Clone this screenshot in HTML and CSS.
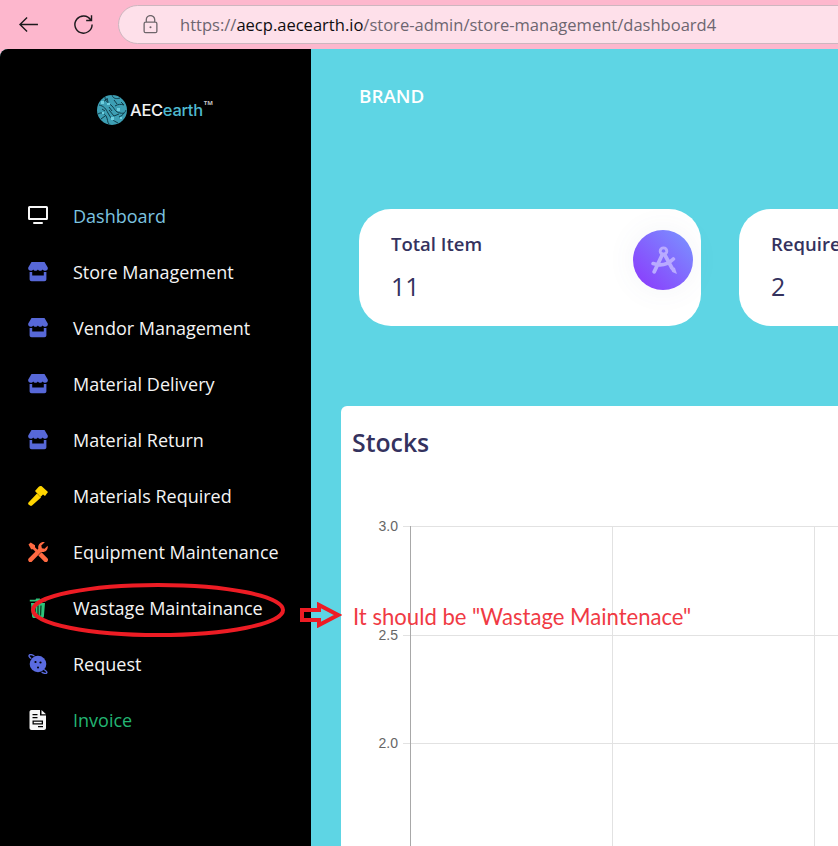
FILE: index.html
```html
<!DOCTYPE html>
<html lang="en">
<head>
<meta charset="utf-8">
<title>AECearth Dashboard</title>
<link rel="stylesheet" href="styles.css">
</head>
<body>
<svg class="defs" width="0" height="0" aria-hidden="true">
  <symbol id="store" viewBox="0 0 20 20">
    <path d="M3.5 0H16.5L19.6 5.2C20.4 7 19.2 8.8 17.3 8.8C16 8.8 15.2 8.2 14.7 7.4C14.1 8.2 13.2 8.8 12.2 8.8C11.2 8.8 10.4 8.3 9.9 7.4C9.4 8.3 8.5 8.8 7.5 8.8C6.5 8.8 5.7 8.3 5.2 7.4C4.7 8.2 3.900 8.8 2.7 8.8C.8 8.8-.4 7 .4 5.2Z"/>
    <path d="M1.6 10H4.2V13.6H15.8V10H18.4V17.2C18.4 18.4 17.6 19.2 16.4 19.2H3.6C2.4 19.2 1.6 18.4 1.6 17.2Z"/>
  </symbol>
</svg>

<header class="browser-bar">
  <svg class="nav-glyph back" viewBox="0 0 22 18"><path d="M21 9H2M9.5 1.5 2 9l7.5 7.5"/></svg>
  <svg class="nav-glyph reload" viewBox="0 0 22 22"><path d="M18.6 6.2A9 9 0 1 0 20 11M19.4 1.2V6.8H13.8"/></svg>
  <div class="address">
    <svg class="lock" viewBox="0 0 16 20"><path d="M3.5 7.5V5a4.5 4.5 0 0 1 9 0v2.5M2.8 7.5h10.4c.9 0 1.6.7 1.6 1.6v8c0 .9-.7 1.6-1.6 1.6H2.8c-.9 0-1.6-.7-1.6-1.6v-8c0-.9.7-1.6 1.6-1.6Z"/><circle class="lock-dot" cx="8" cy="13" r="1.1"/></svg>
    <span class="url"><span class="url-dim">https://</span><span class="url-host">aecp.aecearth.io</span><span class="url-dim">/store-admin/store-management/dashboard4</span></span>
  </div>
</header>

<div class="app">
  <aside class="sidebar">
    <div class="logo">
      <svg class="globe" viewBox="0 0 30 30">
        <circle cx="15" cy="15" r="15" fill="#3d9fb4"/>
        <path d="M2 10c5 1 7 4 9 8s5 8 10 10M8 2c0 5 4 6 7 9s3 6 8 7 5-1 6-3M15 0c1 4 5 4 8 3M1 19c3-2 6-1 8 2s1 6 3 8M18 11c3-2 6-2 9-1M12 15l5 6 5-2M6 7l4-3M22 22c2-1 4-2 5-4M5 14l3 2M17 5l3 4M4 24l4-3M24 7l3 3M10 3l1 4M15 16l-3-4" fill="none" stroke="#103c49" stroke-width="1"/>
        <path d="M4 6h3v3H4zM20 13h3v3h-3zM14 22h3v3h-3zM10 8h3v2h-3zM23 22h2v2h-2zM5 17h2v2H5z" fill="#6ecfdf"/>
      </svg>
      <span class="logo-text">AEC<span class="logo-accent">earth</span></span>
      <span class="logo-tm">TM</span>
    </div>
    <nav class="menu">
      <a class="menu-item menu-item-active">
        <svg class="menu-icon" viewBox="0 0 20 20"><path class="ico-white" fill-rule="evenodd" d="M1.5 0H18.500A1.500 1.500 0 0 1 20 1.500V12.500A1.500 1.500 0 0 1 18.500 14H1.500A1.500 1.500 0 0 1 0 12.500V1.500A1.500 1.500 0 0 1 1.500 0ZM2 2V12H18V2Z"/><rect class="ico-white" x="5" y="16" width="10" height="2" rx="1"/></svg>
        Dashboard
      </a>
      <a class="menu-item"><svg class="menu-icon ico-blue"><use href="#store"/></svg>Store Management</a>
      <a class="menu-item"><svg class="menu-icon ico-blue"><use href="#store"/></svg>Vendor Management</a>
      <a class="menu-item"><svg class="menu-icon ico-blue"><use href="#store"/></svg>Material Delivery</a>
      <a class="menu-item"><svg class="menu-icon ico-blue"><use href="#store"/></svg>Material Return</a>
      <a class="menu-item">
        <svg class="menu-icon" viewBox="0 0 20 20"><path fill="#ffd500" d="M.5 16.500 9 7.500 13 11.500 4 19.500c-.6.500-1.400.500-2 0L.5 18.500c-.5-.6-.5-1.400 0-2Z"/><path fill="#ffd500" d="M7 5 10.500 1C11.500 0 13-.2 14 .5L20 6 17 10 15 8.500 12.500 11Z"/></svg>
        Materials Required
      </a>
      <a class="menu-item">
        <svg class="menu-icon" viewBox="0 0 20 20"><path fill="#ff6a42" d="M.5 2.600 2.700.4 7 3.200V5.200l5.500 5.500-2.100 2.100L5 7.300H3.100ZM13.500 10.300l5.900 5.900c.9.900.9 2.300 0 3.200-.9.900-2.300.9-3.200 0l-5.900-5.900ZM19.600 3.800c.8 3-1.400 6.400-5 6.300-.5 0-1-.1-1.400-.2L4 19.400c-.9.900-2.300.9-3.200 0-.9-.9-.9-2.300 0-3.200l9.500-9.400C9.500 3 12.500-.6 16.800.2L13.300 3.500l.6 2.800 2.700.5Z"/></svg>
        Equipment Maintenance
      </a>
      <a class="menu-item">
        <svg class="menu-icon icon-trash" viewBox="0 0 17 20"><path fill="#2cc47a" d="M.3 1.800H6L6.600.5h3.800l.6 1.300h5.700v1.800H.3ZM1.500 5h14L14.400 18.500c-.1.900-.8 1.500-1.700 1.500H4.300c-.9 0-1.600-.6-1.700-1.500Z"/><path stroke="#0c3d24" stroke-width="1.300" d="M5.500 7.500 6 17.500M8.500 7.500V17.500M11.500 7.500 11 17.500"/></svg>
        Wastage Maintainance
      </a>
      <a class="menu-item">
        <svg class="menu-icon" viewBox="0 0 20 20"><path fill="none" stroke="#5a6be0" stroke-width="1.400" d="M3.200 4.500C1 3 .6 1.800 1.400 1c.9-.8 3-.2 5 1M16 15.500c2.500 1.600 3.400 2.800 2.600 3.600-.8.800-2.800.2-5-1"/><circle cx="10" cy="10" r="8.300" fill="#5a6be0"/><circle cx="7.500" cy="8" r="1.100"/><circle cx="12.500" cy="8.500" r="1.100"/><circle cx="10" cy="13.500" r="1"/></svg>
        Request
      </a>
      <a class="menu-item menu-item-green">
        <svg class="menu-icon" viewBox="0 0 17 20"><path class="ico-white" fill-rule="evenodd" d="M2 0H10.500V5.500H16.500V18C16.500 19.100 15.600 20 14.500 20H2C.9 20 0 19.100 0 18V2C0 .9.900 0 2 0ZM3 4V5.300H8V4ZM3 7V8.300H8V7ZM3 10.500V14.500H13.500V10.500ZM4.300 11.700H12.200V13.300H4.300ZM8.500 16V17.300H13.500V16Z"/><path class="ico-white" d="M12 0 16.500 4.200H12Z"/></svg>
        Invoice
      </a>
    </nav>
  </aside>

  <main class="content">
    <div class="brand">BRAND</div>
    <section class="cards">
      <article class="stat-card">
        <div>
          <div class="stat-label">Total Item</div>
          <div class="stat-value">11</div>
        </div>
        <div class="stat-badge">
          <svg class="stat-glyph" viewBox="0 0 26 28"><path fill="none" stroke="#b9aaff" stroke-width="3.600" stroke-linecap="round" d="M12 8 4 25M14 8l7 13M3 17c7 2.500 14 1 19.500-4.500"/><circle cx="13" cy="5" r="3.200" fill="none" stroke="#b9aaff" stroke-width="2.800"/><path fill="#b9aaff" d="M19 20l5 1 2 6-4.500-2Z"/></svg>
        </div>
      </article>
      <article class="stat-card">
        <div>
          <div class="stat-label">Required</div>
          <div class="stat-value">2</div>
        </div>
      </article>
    </section>
    <section class="panel">
      <h2 class="panel-title">Stocks</h2>
      <svg class="chart" viewBox="0 0 560 400" width="560" height="400">
        <path class="grid" d="M62 66.500H560M62 175.500H560M62 283.500H560M271.500 66V400M473.500 66V400"/>
        <path class="axis" d="M69.500 66V400"/>
        <text class="tick" x="57" y="71">3.0</text>
        <text class="tick" x="57" y="180">2.5</text>
        <text class="tick" x="57" y="288">2.0</text>
      </svg>
    </section>
  </main>
</div>

<svg class="mark-ellipse" viewBox="0 0 258 58"><ellipse cx="129" cy="29" rx="125" ry="25"/></svg>
<svg class="mark-arrow" viewBox="0 0 42 26"><path d="M2 8H19V3L38 13 19 23V18H2Z"/></svg>
<div class="mark-note">It should be "Wastage Maintenace"</div>
</body>
</html>
```

FILE: styles.css
```css
* { box-sizing: border-box; }

html, body {
  margin: 0;
  height: 846px;
  overflow: hidden;
}

body {
  position: relative;
  background: #fdb7cd;
  font-family: "Open Sans", "Liberation Sans", sans-serif;
}

.defs { position: absolute; }

.browser-bar {
  height: 49px;
  display: flex;
  align-items: center;
  overflow: hidden;
  padding: 0 0 1px 18px;
}

.nav-glyph {
  fill: none;
  stroke: #1c1a1d;
  stroke-width: 1.5;
  flex: none;
}

.back { width: 21px; height: 17px; }

.reload {
  width: 21px;
  height: 21px;
  margin-left: 34px;
}

.address {
  flex: none;
  width: 780px;
  height: 39px;
  margin-left: 24px;
  padding-left: 24px;
  display: flex;
  align-items: center;
  background: #fee0ea;
  border: 1px solid #cdb6bf;
  border-radius: 20px 0 0 20px;
}

.lock {
  width: 15px;
  height: 19px;
  flex: none;
  fill: none;
  stroke: #6e666b;
  stroke-width: 1.4;
}

.lock-dot { fill: #6e666b; stroke: none; }

.url {
  margin-left: 22px;
  font-size: 16.550px;
  white-space: nowrap;
}

.url-dim { color: #6d6670; }
.url-host { color: #0f0d10; }

.app {
  height: 797px;
  display: flex;
  overflow: hidden;
  border-top-left-radius: 8px;
  background: #5ed5e4;
}

.sidebar {
  width: 311px;
  flex: none;
  background: #000;
}

.logo {
  height: 139px;
  padding: 46px 0 0 97px;
  display: flex;
  align-items: flex-start;
}

.globe { width: 30px; height: 30px; flex: none; }

.logo-text {
  margin: 4px 0 0 3px;
  font-family: "Inter", sans-serif;
  font-size: 16.500px;
  font-weight: 500;
  line-height: 22px;
  letter-spacing: -0.3px;
  color: #f2f2f2;
}

.logo-accent { color: #4fb9cf; }

.logo-tm {
  margin: 4px 0 0 1px;
  font-size: 6px;
  font-weight: 700;
  line-height: 8px;
  color: #c8c8c8;
}

.menu { display: flex; flex-direction: column; }

.menu-item {
  height: 56px;
  padding-left: 28px;
  display: flex;
  align-items: center;
  font-size: 18px;
  font-weight: 500;
  color: #f4f4f4;
  white-space: nowrap;
}

.menu-item-active { color: #7cc4e0; }
.menu-item-green { color: #23b573; }

.menu-icon {
  width: 20px;
  height: 20px;
  margin-right: 25px;
  flex: none;
}

.ico-white { fill: #f7f7f7; }
.ico-blue { fill: #5768d8; }

.content {
  flex: 1;
  min-width: 0;
  overflow: hidden;
  padding-left: 30px;
}

.brand {
  height: 94px;
  padding: 34px 0 0 18px;
  font-size: 18.800px;
  line-height: 26px;
  font-weight: 600;
  color: #fff;
}

.cards {
  margin: 66px 0 0 18px;
  display: flex;
  gap: 38px;
}

.stat-card {
  flex: none;
  width: 342px;
  height: 117px;
  padding: 21px 8px 0 32px;
  display: flex;
  justify-content: space-between;
  align-items: flex-start;
  background: #fff;
  border-radius: 32px;
  color: #34325e;
}

.stat-label {
  font-size: 18.500px;
  font-weight: 600;
  line-height: 28px;
}

.stat-value {
  margin-top: 13px;
  font-size: 25px;
  font-weight: 500;
  line-height: 30px;
}

.stat-badge {
  width: 60px;
  height: 60px;
  display: flex;
  align-items: center;
  justify-content: center;
  border-radius: 50%;
  background: linear-gradient(45deg, #8a3ffc 10%, #7b8dff 90%);
  box-shadow: 0 0 30px rgba(90, 100, 140, 0.07);
}

.stat-glyph { width: 27px; height: 29px; }

.panel {
  width: 560px;
  height: 460px;
  margin-top: 80px;
  background: #fff;
  border-radius: 6px 0 0 0;
}

.panel-title {
  margin: 0;
  padding: 18px 0 0 11px;
  font-size: 24.800px;
  line-height: 36px;
  font-weight: 600;
  color: #34325e;
}

.chart { display: block; }

.grid {
  fill: none;
  stroke: #e2e2e2;
  stroke-width: 1;
}

.axis { fill: none; stroke: #a8a8a8; stroke-width: 1; }

.tick {
  font-family: "Liberation Sans", sans-serif;
  font-size: 14px;
  fill: #666;
  text-anchor: end;
}

.mark-ellipse {
  position: absolute;
  left: 29px;
  top: 581px;
  width: 258px;
  height: 58px;
  fill: none;
  stroke: #ed1c24;
  stroke-width: 4;
}

.mark-arrow {
  position: absolute;
  left: 300px;
  top: 602px;
  width: 42px;
  height: 26px;
  fill: none;
  stroke: #ed1c24;
  stroke-width: 4;
}

.mark-note {
  position: absolute;
  left: 353px;
  top: 603px;
  font-family: "Lato", sans-serif;
  font-size: 22.100px;
  line-height: 28px;
  color: #f03a44;
  white-space: nowrap;
}
```
